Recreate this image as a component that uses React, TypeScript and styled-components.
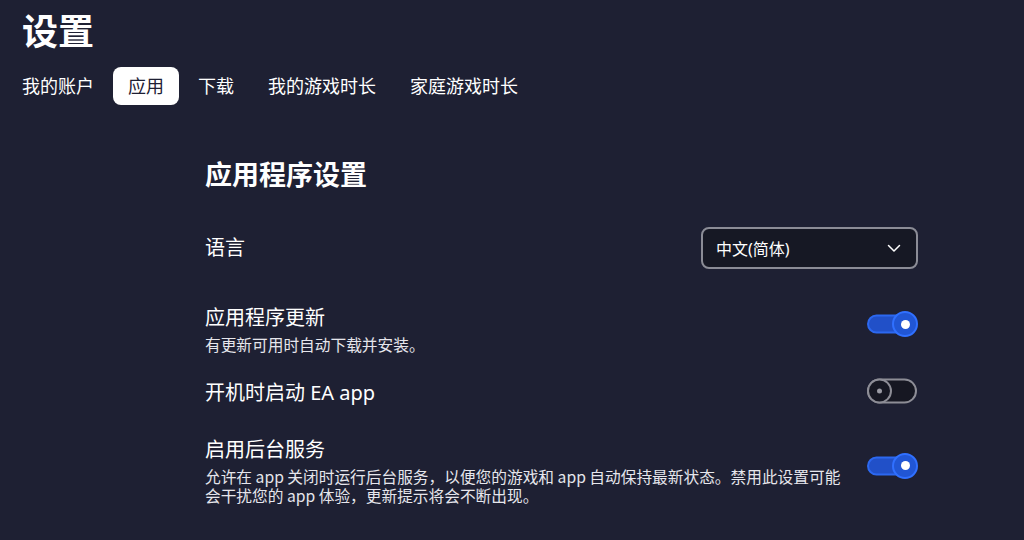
import React, { useState } from "react";
import styled, { createGlobalStyle } from "styled-components";

const GlobalStyle = createGlobalStyle`
  html, body {
    margin: 0;
    padding: 0;
    background: #1e2033;
  }
  body {
    font-family: "Noto Sans", "Noto Sans CJK SC", sans-serif;
    color: #ffffff;
  }
  * { box-sizing: border-box; }
`;

const Page = styled.div`
  width: 1024px;
  height: 540px;
  overflow: hidden;
  background: #1e2033;
  padding: 10px 22px 0;
`;

const PageTitle = styled.h1`
  margin: 0;
  font-size: 36px;
  line-height: 43px;
  font-weight: 700;
  color: #ffffff;
`;

const Tabs = styled.nav`
  display: flex;
  gap: 4px;
  margin: 14px 0 0 -15px;
`;

const Tab = styled.button<{ $active?: boolean }>`
  height: 38px;
  padding: 0 15px;
  border: none;
  border-radius: 8px;
  font-family: inherit;
  font-size: 18px;
  line-height: 38px;
  cursor: pointer;
  background: ${(p) => (p.$active ? "#ffffff" : "transparent")};
  color: ${(p) => (p.$active ? "#1e2033" : "#ffffff")};
`;

const Content = styled.section`
  margin: 54px 0 0 183px;
  width: 713px;
  display: flex;
  flex-direction: column;
`;

const SectionTitle = styled.h2`
  margin: 0;
  font-size: 27px;
  line-height: 32px;
  font-weight: 700;
`;

const Row = styled.div<{ $top: number }>`
  display: flex;
  justify-content: space-between;
  align-items: center;
  margin-top: ${(p) => p.$top}px;
`;

const TextBlock = styled.div<{ $pad?: number }>`
  max-width: 645px;
  padding-top: ${(p) => p.$pad ?? 10}px;
`;

const Label = styled.div`
  font-size: 20px;
  line-height: 28px;
  color: #ffffff;
`;

const Desc = styled.div`
  margin-top: 3px;
  font-family: "Noto Sans CJK SC", sans-serif;
  font-size: 15.7px;
  line-height: 19px;
  color: #e6e6ec;
`;

const Select = styled.div`
  width: 217px;
  height: 42px;
  border: 2px solid #8b8c96;
  border-radius: 8px;
  background: #161824;
  display: flex;
  align-items: center;
  justify-content: space-between;
  padding: 0 15px 0 13px;
  font-size: 16px;
  color: #ffffff;
`;

const Chevron = () => (
  <svg width="14" height="9" viewBox="0 0 14 9" fill="none">
    <path d="M1.5 1.5L7 7L12.5 1.5" stroke="#ffffff" strokeWidth="1.5" strokeLinecap="round" strokeLinejoin="round" />
  </svg>
);

const SwitchBox = styled.button`
  position: relative;
  width: 51px;
  height: 26px;
  padding: 0;
  border: none;
  background: transparent;
  cursor: pointer;
  flex-shrink: 0;
`;

const Track = styled.span<{ $on: boolean }>`
  position: absolute;
  left: 0;
  right: 1px;
  top: 50%;
  transform: translateY(-50%);
  height: ${(p) => (p.$on ? 19 : 25)}px;
  border-radius: 13px;
  border: 2px solid ${(p) => (p.$on ? "#2c68f0" : "#8d8d96")};
  background: ${(p) => (p.$on ? "#2150c8" : "#161722")};
`;

const Knob = styled.span<{ $on: boolean }>`
  position: absolute;
  top: 50%;
  transform: translateY(-50%);
  left: ${(p) => (p.$on ? "25px" : "0px")};
  width: ${(p) => (p.$on ? 26 : 25)}px;
  height: ${(p) => (p.$on ? 26 : 25)}px;
  border-radius: 50%;
  border: 2px solid ${(p) => (p.$on ? "#3070ff" : "#8d8d96")};
  background: ${(p) => (p.$on ? "#2156d4" : "#161722")};
  display: flex;
  align-items: center;
  justify-content: center;
`;

const Dot = styled.span<{ $on: boolean }>`
  width: ${(p) => (p.$on ? 9 : 5)}px;
  height: ${(p) => (p.$on ? 9 : 5)}px;
  border-radius: 50%;
  background: ${(p) => (p.$on ? "#ffffff" : "#9a9aa3")};
`;

const Switch: React.FC<{ on: boolean; onToggle: () => void }> = ({ on, onToggle }) => (
  <SwitchBox onClick={onToggle} aria-pressed={on}>
    <Track $on={on} />
    <Knob $on={on}>
      <Dot $on={on} />
    </Knob>
  </SwitchBox>
);

const tabs = ["我的账户", "应用", "下载", "我的游戏时长", "家庭游戏时长"];

export default function App() {
  const [active, setActive] = useState(1);
  const [update, setUpdate] = useState(true);
  const [startup, setStartup] = useState(false);
  const [bg, setBg] = useState(true);

  return (
    <>
      <GlobalStyle />
      <Page>
        <PageTitle>设置</PageTitle>
        <Tabs>
          {tabs.map((t, i) => (
            <Tab key={t} $active={i === active} onClick={() => setActive(i)}>
              {t}
            </Tab>
          ))}
        </Tabs>
        <Content>
          <SectionTitle>应用程序设置</SectionTitle>
          <Row $top={36}>
            <Label>语言</Label>
            <Select>
              <span>中文(简体)</span>
              <Chevron />
            </Select>
          </Row>
          <Row $top={25}>
            <TextBlock>
              <Label>应用程序更新</Label>
              <Desc>有更新可用时自动下载并安装。</Desc>
            </TextBlock>
            <Switch on={update} onToggle={() => setUpdate(!update)} />
          </Row>
          <Row $top={21}>
            <TextBlock $pad={4}>
              <Label>开机时启动 EA app</Label>
            </TextBlock>
            <Switch on={startup} onToggle={() => setStartup(!startup)} />
          </Row>
          <Row $top={19}>
            <TextBlock>
              <Label>启用后台服务</Label>
              <Desc>
                允许在 app 关闭时运行后台服务，以便您的游戏和 app 自动保持最新状态。禁用此设置可能会干扰您的 app 体验，更新提示将会不断出现。
              </Desc>
            </TextBlock>
            <Switch on={bg} onToggle={() => setBg(!bg)} />
          </Row>
        </Content>
      </Page>
    </>
  );
}
